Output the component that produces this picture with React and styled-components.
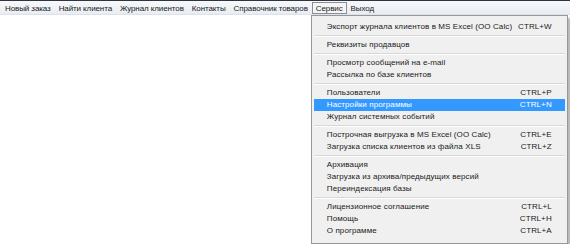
import React from "react";
import styled, { createGlobalStyle } from "styled-components";

const menuBar = [
  "Новый заказ",
  "Найти клиента",
  "Журнал клиентов",
  "Контакты",
  "Справочник товаров",
  "Сервис",
  "Выход",
];

const serviceMenu = [
  { label: "Экспорт журнала клиентов в MS Excel (OO Calc)", key: "CTRL+W" },
  "sep",
  { label: "Реквизиты продавцов" },
  "sep",
  { label: "Просмотр сообщений на e-mail" },
  { label: "Рассылка по базе клиентов" },
  "sep",
  { label: "Пользователи", key: "CTRL+P" },
  { label: "Настройки программы", key: "CTRL+N", hot: true },
  { label: "Журнал системных событий" },
  "sep",
  { label: "Построчная выгрузка в MS Excel (OO Calc)", key: "CTRL+E" },
  { label: "Загрузка списка клиентов из файла XLS", key: "CTRL+Z" },
  "sep",
  { label: "Архивация" },
  { label: "Загрузка из архива/предыдущих версий" },
  { label: "Переиндексация базы" },
  "sep",
  { label: "Лицензионное соглашение", key: "CTRL+L" },
  { label: "Помощь", key: "CTRL+H" },
  { label: "О программе", key: "CTRL+A" },
];

export default function App() {
  return (
    <>
      <GlobalStyle />
      <Window>
        <MenuBar>
          {menuBar.map((name) => (
            <BarItem key={name} $open={name === "Сервис"}>
              {name}
              {name === "Сервис" && (
                <Dropdown>
                  {serviceMenu.map((item, i) =>
                    item === "sep" ? (
                      <Separator key={i} />
                    ) : (
                      <Row key={i} $hot={item.hot}>
                        <span>{item.label}</span>
                        {item.key && <span>{item.key}</span>}
                      </Row>
                    )
                  )}
                </Dropdown>
              )}
            </BarItem>
          ))}
        </MenuBar>
      </Window>
    </>
  );
}

const GlobalStyle = createGlobalStyle`
  html, body {
    margin: 0;
    background: #ffffff;
  }
  body {
    font-family: "Liberation Sans", Arial, sans-serif;
    font-size: 8px;
    color: #1a1a1a;
  }
`;

const Window = styled.div`
  width: 570px;
  height: 244px;
  background: #ffffff;
  overflow: hidden;
`;

const MenuBar = styled.nav`
  display: flex;
  align-items: center;
  height: 13px;
  padding: 0 0 0 1px;
  border-top: 1px solid #2e3440;
  background: linear-gradient(#f6f8fb, #e9edf3);
  border-bottom: 1px solid #dde2ea;
  letter-spacing: -0.1px;
`;

const BarItem = styled.div`
  position: relative;
  height: 12px;
  line-height: 11px;
  padding: 0 3px;
  white-space: nowrap;
  box-sizing: border-box;
  border: 1px solid ${(p) => (p.$open ? "#8a8f96" : "transparent")};
  background: ${(p) => (p.$open ? "#f4f5f7" : "transparent")};
`;

const Dropdown = styled.div`
  position: absolute;
  top: 12px;
  left: -2px;
  width: 251px;
  padding: 5px 2px 6px 2px;
  background: #f0f0f0;
  border: 1px solid #979797;
  box-shadow: 3px 3px 2px rgba(0, 0, 0, 0.28);
  letter-spacing: 0.1px;
  z-index: 2;
`;

const Row = styled.div`
  display: flex;
  justify-content: space-between;
  height: 12px;
  line-height: 12px;
  padding: 0 13px 0 13px;
  color: ${(p) => (p.$hot ? "#ffffff" : "#1a1a1a")};
  background: ${(p) => (p.$hot ? "#3399ff" : "transparent")};
`;

const Separator = styled.div`
  margin: 2px 0 2px;
  height: 1px;
  background: #d7d7d7;
  border-bottom: 1px solid #ffffff;
`;
